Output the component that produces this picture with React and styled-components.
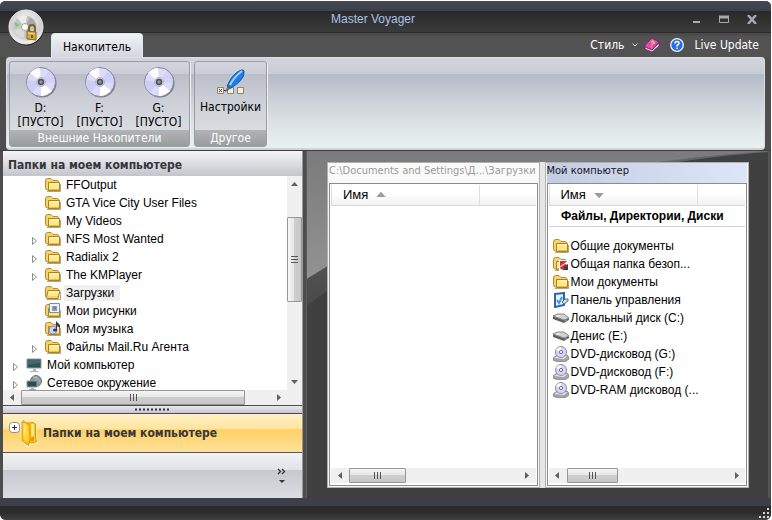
import React from 'react';
import styled, { createGlobalStyle, css } from 'styled-components';

const ui = '"DejaVu Sans Condensed", "DejaVu Sans", sans-serif';
const sans = '"Liberation Sans", Arial, sans-serif';

const GlobalStyle = createGlobalStyle`
  *, *::before, *::after { box-sizing: border-box; }
  body { margin: 0; background: #fff; }
  button { border: 0; padding: 0; margin: 0; background: none; color: inherit; font: inherit; cursor: pointer; }
  a { color: inherit; text-decoration: none; }
  ul { list-style: none; margin: 0; padding: 0; }
  h1, h2 { margin: 0; font: inherit; }
  svg { display: block; flex: none; }
`;

const Window = styled.div`
  position: relative;
  height: 100vh;
  min-height: 440px;
  margin-right: 1px;
  display: flex;
  flex-direction: column;
  border-top: 1px solid #fff;
  border-radius: 6px;
  overflow: hidden;
  background: #4d4d4d;
  font-family: ${ui};
  font-size: 12px;
`;

const TitleBar = styled.header`
  flex: none;
  height: 32px;
  display: grid;
  grid-template-columns: 1fr auto 1fr;
  align-items: center;
  padding: 4px 11px 0 0;
  color: #a9c3ec;
  font-family: ${sans};
  background: linear-gradient(#454854 0, #3c404c 10px, #292929 10px, #303030 18px, #3b3b3b 31px, #2b2b2b 31px);
`;

const Title = styled.h1`
  grid-column: 2;
  padding-right: 14px;
  font-size: 12px;
  line-height: 16px;
`;

const WindowButtons = styled.div`
  display: flex;
  justify-content: flex-end;
  gap: 12px;
`;

const WindowButton = styled.button`
  width: 16px;
  height: 16px;
  display: grid;
  place-items: center;
`;

const AppButton = styled.button`
  position: absolute;
  left: 8px;
  top: 8px;
  z-index: 2;
`;

const TabBar = styled.nav`
  flex: none;
  height: 24px;
  padding: 0 12px 0 51px;
  display: flex;
  align-items: flex-end;
  justify-content: space-between;
  background: linear-gradient(#484848, #525252 4px);
`;

const Tab = styled.button`
  height: 24px;
  padding: 2px 11px 0;
  border: 1px solid #d9eeee;
  border-bottom: 0;
  border-radius: 4px 4px 0 0;
  background: linear-gradient(#f0f2f4, #d3d6de);
  color: #000;
  line-height: 18px;
`;

const TabTools = styled.div`
  height: 24px;
  display: flex;
  align-items: center;
  color: #fff;
  gap: 6px;
`;

const ToolButton = styled.button`
  display: flex;
  align-items: center;
  gap: 8px;
  line-height: 18px;
  padding-right: ${p => (p.$icon ? 4 : 0)}px;
`;

const ToolLink = styled.a`
  line-height: 18px;
`;

const Ribbon = styled.section`
  flex: none;
  min-height: 92px;
  margin: 0 6px;
  padding: 3px 2px 1px;
  display: flex;
  gap: 4px;
  border: 1px solid #dcdfe3;
  border-bottom: 2px solid #cdd4d4;
  border-radius: 4px;
  background: linear-gradient(#d2d5dd 0, #c9ccd6 16px, #b5bac8 16px, #ced2da 45px, #e2e9e9 75px, #e8f1f0 100%);
`;

const Group = styled.div`
  display: flex;
  flex-direction: column;
  border: 1px solid #9a9ca1;
  border-radius: 3px;
  box-shadow: 1px 1px 0 #eef1f2;
  background: linear-gradient(#d3d6de 0, #c9ccd6 12px, #babec9 12px, #cdd0d7 40px, #dfe4e5 100%);
  overflow: hidden;
`;

const GroupItems = styled.div`
  flex: 1;
  display: flex;
  padding: 0 1px;
`;

const GroupLabel = styled.div`
  height: 16px;
  line-height: 16px;
  text-align: center;
  color: #fff;
  background: linear-gradient(#b1b3b4, #999c9c);
`;

const RibbonButton = styled.button`
  min-width: 59px;
  padding: ${p => (p.$wide ? '5px 4px 0' : '4px 0 1px')};
  display: flex;
  flex-direction: column;
  align-items: center;
  gap: ${p => (p.$wide ? 1 : 3)}px;
  color: #000;
  line-height: 14px;
`;

const Lines = styled.span`
  display: block;
  white-space: pre-line;
  text-align: center;
`;

const Workspace = styled.main`
  flex: 1;
  min-height: 0;
  padding: 0 2px 0 3px;
  display: flex;
  border-top: 1px solid #3d3d3d;
`;

const Sidebar = styled.aside`
  flex: 0 0 300px;
  display: flex;
  flex-direction: column;
  min-height: 0;
  background: #fff;
  border-right: 1px solid #999;
`;

const SidebarTitle = styled.h2`
  flex: none;
  height: 25px;
  padding: 3px 5px 0;
  line-height: 22px;
  font-weight: bold;
  color: #33363c;
  background: linear-gradient(#f5f5f6, #c3c5cb);
`;

const TreeArea = styled.div`
  flex: 1;
  min-height: 0;
  display: flex;
  background: #f0f0f0;
`;

const Tree = styled.ul`
  flex: 1;
  min-width: 0;
  overflow: hidden;
  background: #fff;
  font-family: ${sans};
`;

const TreeRow = styled.li`
  height: 18px;
  display: flex;
  align-items: center;
  gap: 1px;
  padding-left: ${p => (p.$level ? 28 : 9)}px;
`;

const Expander = styled.button`
  width: 13px;
  height: 14px;
  margin-top: 3px;
  visibility: ${p => (p.$shown ? 'visible' : 'hidden')};
`;

const TreeLabel = styled.span`
  margin-left: 2px;
  padding: 0 3px 0 2px;
  line-height: 16px;
  white-space: nowrap;
  ${p => p.$selected && css`background: #f0f0f0; padding-right: 6px;`}
`;

const ScrollBar = styled.div`
  flex: none;
  display: flex;
  align-items: center;
  background: #f0f0f0;
  ${p => (p.$vertical
    ? css`flex-direction: column; width: 15px;`
    : css`height: 15px; padding-right: ${p.$corner ? 15 : 0}px;`)}
`;

const ScrollArrow = styled.button`
  width: ${p => (p.$vertical ? 15 : 18)}px;
  height: ${p => (p.$vertical ? 17 : 15)}px;
  display: grid;
  place-items: center;
`;

const Track = styled.div`
  flex: ${p => p.$grow} 1 0;
`;

const Thumb = styled.button`
  flex: ${p => p.$grow} 1 0;
  display: grid;
  place-items: center;
  border: 1px solid #969696;
  border-radius: 1px;
  ${p => (p.$vertical
    ? css`width: 15px; background: linear-gradient(90deg, #f6f6f6, #e6e6e6 45%, #cfcfcf 50%, #c6c6c6);`
    : css`height: 15px; background: linear-gradient(#f6f6f6, #e6e6e6 45%, #cfcfcf 50%, #c6c6c6);`)}
`;

const Splitter = styled.div`
  flex: none;
  height: 9px;
  display: grid;
  place-items: center;
  border-top: 1px solid #484b52;
  border-bottom: 1px solid #484b52;
  background: linear-gradient(#e8e9ec, #c6c8ce);
`;

const NavButton = styled.button`
  flex: none;
  height: 39px;
  padding: 0 5px;
  display: flex;
  align-items: center;
  gap: 5px;
  text-align: left;
  font-weight: bold;
  color: #33363c;
  border-bottom: 1px solid #55565a;
  background: linear-gradient(#fff0c4, #ffe4a0 40%, #ffd064 41%, #ffe19a);
`;

const NavOverflow = styled.div`
  flex: none;
  height: 45px;
  padding: 0 16px 0 0;
  display: flex;
  align-items: center;
  justify-content: flex-end;
  background: linear-gradient(#f2f3f4, #e0e2e4 17px, #c6c8ce 17px, #dcdde2);
`;

const Desk = styled.div`
  position: relative;
  flex: 1;
  min-width: 0;
  margin-left: 3px;
  padding: 11px 19px 10px 20px;
  display: flex;
  border: 1px solid #5c5c5c;
  border-width: 0 1px;
  background: #404040;
`;

const Swoosh = styled.svg`
  position: absolute;
  inset: 0;
  width: 100%;
  height: 100%;
`;

const Panels = styled.div`
  position: relative;
  flex: 1;
  min-width: 0;
  display: grid;
  grid-template-columns: 212fr 204fr;
  gap: 5px;
  background: #e6e6e6;
`;

const Panel = styled.section`
  min-width: 0;
  display: flex;
  flex-direction: column;
  padding: 0 1px 1px;
  border: 1px solid #b0b0b0;
  background: #f7f7f7;
`;

const PanelTitle = styled.h2`
  flex: none;
  height: 20px;
  line-height: 16px;
  white-space: nowrap;
  overflow: hidden;
  font-family: ${ui};
  font-size: 11px;
  color: ${p => (p.$active ? '#15171c' : '#9a9a9a')};
  background: ${p => (p.$active ? 'linear-gradient(90deg, #c4cce2, #dde5f8)' : '#fafafa')};
`;

const PanelBody = styled.div`
  flex: 1;
  min-height: 0;
  display: flex;
  flex-direction: column;
  padding: 1px 1px 2px;
  border: 1px solid #8c8c8c;
  background: #fff;
  font-family: ${sans};
`;

const Table = styled.table`
  width: 100%;
  table-layout: fixed;
  border-collapse: collapse;
`;

const Th = styled.th`
  width: ${p => (p.$main ? 'auto' : p.$width)};
  height: 20px;
  padding: 0 0 0 11px;
  text-align: left;
  font-weight: normal;
  border-left: 1px solid #dedede;
  border-bottom: 1px solid #d8d8d8;
  background: linear-gradient(#fff 40%, #f2f2f2);
`;

const SortButton = styled.button`
  display: flex;
  align-items: center;
  gap: 7px;
  line-height: 18px;
  font-size: 13px;
`;

const GroupCell = styled.td`
  height: 21px;
  padding: 0 0 0 12px;
  line-height: 18px;
  font-weight: bold;
  white-space: nowrap;
  border-bottom: 1px solid #c9d3de;
`;

const FileList = styled.ul`
  padding: 10px 0 0 4px;
`;

const FileRow = styled.li`
  height: 18px;
  display: flex;
  align-items: center;
  gap: 2px;
  white-space: nowrap;
`;

const Spacer = styled.div`
  flex: 1;
`;

const Footer = styled.footer`
  flex: none;
  height: 22px;
  padding: 0 1px 1px;
  display: flex;
  align-items: flex-end;
  justify-content: flex-end;
  background: linear-gradient(#3d404b 0, #3d404b 8px, #2a2a2a 8px, #2d2d2d 15px, #414141 100%);
`;

const Folder = ({ open, badge }) => (
  <svg width="16" height="16" viewBox="0 0 16 16">
    <path d="M2 14.500H15.500V7" fill="none" stroke="#7a6a3c" opacity=".6" />
    <path d="M.5 4Q.5 1.500 2.500 1.500H6L8 3.500H12.500Q13.500 3.500 13.500 5V13H3Q.5 13 .5 11Z" fill="#f6d469" stroke="#b98a2c" />
    <path d={open ? 'M1.500 13L3 5.500H15L13 13.500H2Z' : 'M3.500 5.500H14.500V13.500H3.500Z'} fill="#ffe98a" stroke="#b07f22" />
    <path d={open ? 'M4 7H14' : 'M4.500 7H14'} stroke="#fff8cf" />
    <path d={open ? 'M3 12H13' : 'M4.500 12.500H14'} stroke="#eebb45" />
    {badge === 'picture' && <g><path d="M4.500 .5H14.500V9.500H4.500Z" fill="#edf5ff" stroke="#6b93bd" /><path d="M7 3H12V8H7Z" fill="#6fa6dc" /><circle cx="10" cy="5" r="1.500" fill="#dc5a4a" /></g>}
    {badge === 'music' && <g><circle cx="8" cy="9" r="4" fill="#d0d2f2" stroke="#8d90c4" /><path d="M11 9V0L15 4V7L12 4V9" fill="#273a66" /><ellipse cx="10" cy="9" rx="2" ry="1.500" fill="#273a66" /></g>}
    {badge === 'shared' && <g><path d="M6 4H16V15H6Z" fill="#fff" /><path d="M7 5L14 5L12 8L15 9L9 14L7 12Z" fill="#d32f3b" /><path d="M11 11L15 8V14H10Z" fill="#3d3d3d" /><path d="M7 11L14 6" stroke="#fff" /></g>}
  </svg>
);

const Monitor = () => (
  <svg width="16" height="16" viewBox="0 0 16 16">
    <path d="M1 2H15V11H1Z" fill="#2f5355" stroke="#8d9a9c" />
    <path d="M2 3H14V6L2 8Z" fill="#46686a" />
    <path d="M7 12H10V14H12V15H4V14H7Z" fill="#aeb4b5" />
  </svg>
);

const Network = () => (
  <svg width="16" height="16" viewBox="0 0 16 16">
    <circle cx="10" cy="6" r="5.500" fill="#8c989c" stroke="#6c777a" />
    <path d="M7 2Q12 2 14 7M10 1V10" stroke="#b2babc" fill="none" />
    <path d="M1 6H11V12H1Z" fill="#2c4c4e" stroke="#909b9d" />
    <path d="M5 13H8V14H10V15H3V14H5Z" fill="#a7adae" />
  </svg>
);

const Control = () => (
  <svg width="16" height="16" viewBox="0 0 16 16">
    <path d="M2 2L11 1V13L2 15Z" fill="#e7f4ff" stroke="#2b64ad" strokeWidth="2" />
    <path d="M4 8L6 11L9 5" stroke="#4f93d6" strokeWidth="2" fill="none" />
    <path d="M9 10L12 7H15V9L11 12Z" fill="#d5dce4" stroke="#4a6b8e" />
  </svg>
);

const Drive = () => (
  <svg width="16" height="16" viewBox="0 0 16 16">
    <path d="M0 6L5 4H11L16 8V10L11 13L0 9Z" fill="#616161" />
    <path d="M0 6L5 4H11L16 8L11 10Z" fill="#d2d2d2" stroke="#8b8b8b" />
    <path d="M3 6H7" stroke="#fff" />
    <path d="M12 11H14" stroke="#a5b8a0" />
  </svg>
);

const DiscDrive = () => (
  <svg width="16" height="16" viewBox="0 0 16 16">
    <path d="M0 12L4 9H14L16 11V13L12 16H5L0 14Z" fill="#a5a5a8" stroke="#77777b" strokeWidth=".7" />
    <path d="M1 12L5 10H14L11 13Z" fill="#e8e8ea" />
    <circle cx="8" cy="6" r="5.500" fill="#d7d7f4" stroke="#8b8bb0" />
    <path d="M8 6L3 4Q5 1 8 1Z" fill="#fff" />
    <circle cx="8" cy="6" r="1.600" fill="#fff" stroke="#66669a" />
  </svg>
);

const icons = {
  folder: <Folder />,
  open: <Folder open />,
  picture: <Folder badge="picture" />,
  music: <Folder badge="music" />,
  shared: <Folder badge="shared" />,
  monitor: <Monitor />,
  network: <Network />,
  control: <Control />,
  drive: <Drive />,
  disc: <DiscDrive />,
};

const Disc = () => (
  <svg width="32" height="32" viewBox="0 0 32 32">
    <circle cx="17" cy="17" r="14.500" fill="#77798a" />
    <circle cx="16" cy="16" r="14.500" fill="#dcdcf8" stroke="#85859c" />
    <path d="M16 16L5 7Q9 2 15 2Z" fill="#fbfbff" />
    <path d="M16 16L27 25Q22 30 16 30Z" fill="#fff" />
    <path d="M16 16L2 14Q1 22 7 27Z" fill="#cdcef5" />
    <path d="M16 16L30 17Q30 9 24 5Z" fill="#d0d1f6" />
    <circle cx="16" cy="16" r="4.500" fill="#d6d6e2" stroke="#b4b4c8" />
    <circle cx="16" cy="16" r="2.500" fill="#9395a2" stroke="#4f505c" strokeWidth="1.500" />
  </svg>
);

const Settings = () => (
  <svg width="32" height="32" viewBox="0 0 32 32">
    <g fill="#f6f0d8" stroke="#8b8575">
      <path d="M3.500 20.500H9.500V26.500H3.500ZM13.500 20.500H19.500V26.500H13.500ZM23.500 20.500H29.500V26.500H23.500Z" />
    </g>
    <path d="M5 22L8 25M8 22L5 25M10 23.500H14" stroke="#333" />
    <path d="M11 25L14 18L18 21Z" fill="#6d7076" />
    <path d="M13 19Q17 10 22 6Q29 1 30 4Q31 9 26 14Q22 18 17 21Z" fill="#1f7de8" stroke="#1757a8" />
    <path d="M16 18Q20 10 28 4" stroke="#9bd6ff" strokeWidth="2" fill="none" />
  </svg>
);

const AppLogo = () => (
  <svg width="37" height="37" viewBox="0 0 37 37">
    <defs>
      <radialGradient id="orb" cx="50%" cy="35%" r="65%">
        <stop offset="0" stopColor="#fafafa" />
        <stop offset=".7" stopColor="#cfcfd0" />
        <stop offset="1" stopColor="#f4f4f4" />
      </radialGradient>
    </defs>
    <circle cx="18.500" cy="19" r="17.500" fill="#2a2a2a" />
    <circle cx="18" cy="18" r="17" fill="url(#orb)" stroke="#ececec" />
    <circle cx="17" cy="18" r="11.500" fill="#c4c4c6" />
    <path d="M17 18L9 9Q14 5 19 7Z" fill="#ececec" />
    <path d="M17 18L6 21Q9 29 16 29Z" fill="#d9d9da" />
    <path d="M17 18L22 8Q27 11 28 16Z" fill="#a9a9ac" />
    <path d="M6 13L12 16L8 18Z" fill="#67d84e" />
    <circle cx="17" cy="18" r="3.500" fill="#fff" stroke="#a5a5a5" />
    <path d="M21 23V19Q21 16 24 16Q27 16 27 19V23" fill="none" stroke="#7c6424" strokeWidth="2" />
    <path d="M19 22L28 23V31L19 30Z" fill="#cfa640" stroke="#8a6a1e" />
    <path d="M20 24L27 25" stroke="#f5dd8a" />
    <path d="M24 26V29" stroke="#5d4711" strokeWidth="1.500" />
  </svg>
);

const Book = () => (
  <svg width="16" height="16" viewBox="0 0 16 16">
    <path d="M1 8L8 1L15 5L8 13L1 10Z" fill="#d94fb4" stroke="#84226b" />
    <path d="M1 10L8 13L15 6V9L8 15L1 12Z" fill="#f0e3ee" stroke="#84226b" strokeWidth=".8" />
    <path d="M7 5Q10 3 10 6L8 7M7 9H8" stroke="#ffd84f" strokeWidth="1.300" fill="none" />
  </svg>
);

const Help = () => (
  <svg width="14" height="14" viewBox="0 0 14 14">
    <circle cx="7" cy="7" r="6.300" fill="#2a6fe0" stroke="#eaf2ff" strokeWidth="1.300" />
    <path d="M5 5.500Q5 3.500 7 3.500Q9 3.500 9 5.300Q9 6.300 7 7.500V8.500M7 9.500V11" stroke="#fff" strokeWidth="1.500" fill="none" />
  </svg>
);

const NavFolders = () => (
  <svg width="30" height="30" viewBox="0 0 30 30">
    <rect x="1.500" y="4.500" width="10" height="10" rx="3" fill="#fff" stroke="#8a8d93" />
    <path d="M4 9.500H9M6.500 7V12" stroke="#333" />
    <path d="M12.500 2Q13 1 15 1L20 4L26 3L28.500 6V19L30 23L29 25L24 26L20 29L13 24Z" fill="#fffbe8" />
    <path d="M19 5L26 4.500L27.500 6V20L29 23L27 24.500L19 25Z" fill="#ffc928" stroke="#d5920e" />
    <path d="M14 3.500L15 2.500L22 7V22L20.500 27.500L14 23Z" fill="#ffbe12" stroke="#dc9608" />
    <path d="M15.500 5L20.500 8.500V24L15.500 21Z" fill="#ffd43e" />
    <path d="M15.500 5L18 7V14L15.500 18Z" fill="#ffe67a" />
    <path d="M24.500 6V18" stroke="#ffee9c" strokeWidth="2" />
    <path d="M22 23Q23 18 26 19V23Z" fill="#e89b00" />
  </svg>
);

const arrowPaths = {
  up: 'M1 6L4.500 2L8 6Z',
  down: 'M1 3L4.500 7L8 3Z',
  left: 'M6 1L2 4.500L6 8Z',
  right: 'M3 1L7 4.500L3 8Z',
};

const Arrow = ({ dir, size = 9, color = '#606060' }) => (
  <svg width={size} height={size} viewBox="0 0 9 9"><path d={arrowPaths[dir]} fill={color} /></svg>
);

const Grip = ({ vertical }) => (
  <svg width="9" height="9" viewBox="0 0 9 9">
    <path d={vertical ? 'M1 1.500H8M1 4.500H8M1 7.500H8' : 'M1.500 1V8M4.500 1V8M7.500 1V8'} stroke="#555" />
  </svg>
);

const Scroller = ({ vertical, corner, before = 0, size, after }) => (
  <ScrollBar $vertical={vertical} $corner={corner}>
    <ScrollArrow $vertical={vertical} aria-label={vertical ? 'Вверх' : 'Влево'}><Arrow dir={vertical ? 'up' : 'left'} /></ScrollArrow>
    <Track $grow={before} />
    <Thumb $vertical={vertical} $grow={size} aria-label="Прокрутка"><Grip vertical={vertical} /></Thumb>
    <Track $grow={after} />
    <ScrollArrow $vertical={vertical} aria-label={vertical ? 'Вниз' : 'Вправо'}><Arrow dir={vertical ? 'down' : 'right'} /></ScrollArrow>
  </ScrollBar>
);

const tree = [
  { label: 'FFOutput', icon: 'folder', level: 1 },
  { label: 'GTA Vice City User Files', icon: 'folder', level: 1 },
  { label: 'My Videos', icon: 'folder', level: 1 },
  { label: 'NFS Most Wanted', icon: 'folder', level: 1, children: true },
  { label: 'Radialix 2', icon: 'folder', level: 1, children: true },
  { label: 'The KMPlayer', icon: 'folder', level: 1, children: true },
  { label: 'Загрузки', icon: 'open', level: 1, selected: true },
  { label: 'Мои рисунки', icon: 'picture', level: 1 },
  { label: 'Моя музыка', icon: 'music', level: 1 },
  { label: 'Файлы Mail.Ru Агента', icon: 'folder', level: 1, children: true },
  { label: 'Мой компьютер', icon: 'monitor', level: 0, children: true },
  { label: 'Сетевое окружение', icon: 'network', level: 0, children: true },
];

const files = [
  ['folder', 'Общие документы'],
  ['shared', 'Общая папка безоп...'],
  ['folder', 'Мои документы'],
  ['control', 'Панель управления'],
  ['drive', 'Локальный диск (C:)'],
  ['drive', 'Денис (E:)'],
  ['disc', 'DVD-дисковод (G:)'],
  ['disc', 'DVD-дисковод (F:)'],
  ['disc', 'DVD-RAM дисковод (...'],
];

const FilePanel = ({ title, active, sort, rest, group, items = [], thumb, after }) => (
  <Panel>
    <PanelTitle $active={active}>{title}</PanelTitle>
    <PanelBody>
      <Table>
        <thead>
          <tr>
            <Th $main><SortButton>Имя<Arrow dir={sort} size={12} color="#9c9c9c" /></SortButton></Th>
            <Th $width={rest} aria-label="Сведения" />
          </tr>
        </thead>
        {group && <tbody><tr><GroupCell colSpan={2}>{group}</GroupCell></tr></tbody>}
      </Table>
      <FileList>
        {items.map(([icon, name]) => <FileRow key={name}>{icons[icon]}<span>{name}</span></FileRow>)}
      </FileList>
      <Spacer />
      <Scroller size={thumb} after={after} />
    </PanelBody>
  </Panel>
);

export default function App() {
  return (
    <>
      <GlobalStyle />
      <Window>
        <TitleBar>
          <Title>Master Voyager</Title>
          <WindowButtons>
            <WindowButton aria-label="Свернуть"><svg width="9" height="9"><path d="M1 7H8" stroke="#a5aab4" strokeWidth="2" /></svg></WindowButton>
            <WindowButton aria-label="Развернуть"><svg width="10" height="9"><path d="M.5 1.500H9.500V7.500H.5Z" fill="none" stroke="#a5aab4" /><path d="M0 2H10" stroke="#a5aab4" strokeWidth="3" /></svg></WindowButton>
            <WindowButton aria-label="Закрыть"><svg width="10" height="9"><path d="M1 0L9 9M9 0L1 9" stroke="#a5aab4" strokeWidth="2.500" /></svg></WindowButton>
          </WindowButtons>
        </TitleBar>
        <AppButton aria-label="Меню"><AppLogo /></AppButton>
        <TabBar>
          <Tab>Накопитель</Tab>
          <TabTools>
            <ToolButton>Стиль<svg width="6" height="5"><path d="M.5 .5L3 3L5.500 .5" stroke="#ddd" fill="none" /></svg></ToolButton>
            <ToolButton $icon aria-label="Справочник"><Book /></ToolButton>
            <ToolButton $icon aria-label="Справка"><Help /></ToolButton>
            <ToolLink href="#update">Live Update</ToolLink>
          </TabTools>
        </TabBar>
        <Ribbon>
          <Group>
            <GroupItems>
              {['D', 'F', 'G'].map(d => (
                <RibbonButton key={d}><Disc /><Lines>{`${d}:\n[ПУСТО]`}</Lines></RibbonButton>
              ))}
            </GroupItems>
            <GroupLabel>Внешние Накопители</GroupLabel>
          </Group>
          <Group>
            <GroupItems>
              <RibbonButton $wide><Settings /><Lines>Настройки</Lines></RibbonButton>
            </GroupItems>
            <GroupLabel>Другое</GroupLabel>
          </Group>
        </Ribbon>
        <Workspace>
          <Sidebar>
            <SidebarTitle>Папки на моем компьютере</SidebarTitle>
            <TreeArea>
              <Tree>
                {tree.map(n => (
                  <TreeRow key={n.label} $level={n.level}>
                    <Expander $shown={n.children} aria-label="Раскрыть">
                      <svg width="8" height="10"><path d="M1.500 1.500L5.500 5L1.500 8.500Z" fill="#fff" stroke="#8c8c8c" /></svg>
                    </Expander>
                    {icons[n.icon]}
                    <TreeLabel $selected={n.selected}>{n.label}</TreeLabel>
                  </TreeRow>
                ))}
              </Tree>
              <Scroller vertical before={24} size={84} after={72} />
            </TreeArea>
            <Scroller corner size={222} after={24} />
            <Splitter><svg width="36" height="3"><path d="M0 1.500H36" stroke="#333" strokeWidth="2" strokeDasharray="2 2" /></svg></Splitter>
            <NavButton><NavFolders />Папки на моем компьютере</NavButton>
            <NavOverflow>
              <button aria-label="Настроить кнопки">
                <svg width="9" height="16"><path d="M1 1L3.500 3.500L1 6M5 1L7.500 3.500L5 6" stroke="#333" strokeWidth="1.300" fill="none" /><path d="M2 12H8L5 15Z" fill="#333" /></svg>
              </button>
            </NavOverflow>
          </Sidebar>
          <Desk>
            <Swoosh viewBox="0 0 464 348" preserveAspectRatio="none">
              <defs>
                <linearGradient id="light" x1="0" y1="0" x2="0" y2="1">
                  <stop offset="0" stopColor="#7b7b7b" />
                  <stop offset="1" stopColor="#929292" />
                </linearGradient>
                <linearGradient id="mid" x1="0" y1="0" x2="0" y2="1">
                  <stop offset="0" stopColor="#666" />
                  <stop offset="1" stopColor="#4a4a4a" />
                </linearGradient>
              </defs>
              <path d="M0 0H464V1Q170 24 0 155Z" fill="url(#mid)" />
              <path d="M0 0H464Q170 20 0 128Z" fill="url(#light)" />
            </Swoosh>
            <Panels>
              <FilePanel title="C:\Documents and Settings\Д...\Загрузки" sort="up" rest="56px" thumb={57} after={115} />
              <FilePanel title="Мой компьютер" active sort="down" rest="48px" group="Файлы, Директории, Диски" items={files} thumb={51} after={111} />
            </Panels>
          </Desk>
        </Workspace>
        <Footer>
          <svg width="12" height="12"><path d="M9 1H11V3H9ZM9 5H11V7H9ZM5 5H7V7H5ZM9 9H11V11H9ZM5 9H7V11H5ZM1 9H3V11H1Z" fill="#d6d6d6" /></svg>
        </Footer>
      </Window>
    </>
  );
}
